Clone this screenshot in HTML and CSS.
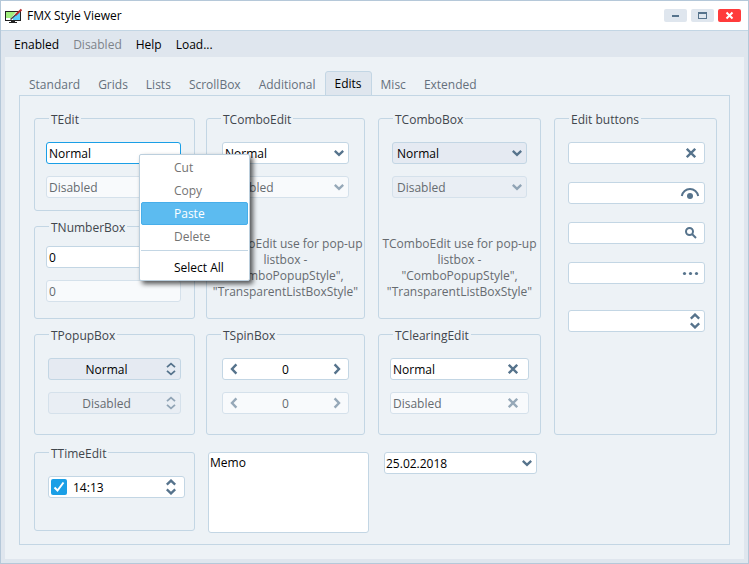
FILE: index.html
```html
<!DOCTYPE html>
<html lang="en">
<head>
<meta charset="utf-8">
<meta name="viewport" content="width=device-width, initial-scale=1">
<title>FMX Style Viewer</title>
<link rel="stylesheet" href="styles.css">
</head>
<body>
<svg class="sprite" aria-hidden="true">
  <symbol id="chevron-down" viewBox="0 0 10 12"><path d="M.8 3.800 5 7.800l4.200-4" /></symbol>
  <symbol id="chevron-left" viewBox="0 0 10 12"><path d="M7.400 1.400 3 6l4.400 4.600" /></symbol>
  <symbol id="chevron-right" viewBox="0 0 10 12"><path d="M2.600 1.400 7 6l-4.400 4.600" /></symbol>
  <symbol id="cross" viewBox="0 0 10 12"><path d="M.8 1.800l8.400 8.400M9.200 1.800.8 10.200" /></symbol>
  <symbol id="updown" viewBox="0 0 10 16"><path d="M.8 5.600 5 1.600l4.200 4M.8 10.400l4.200 4 4.200-4" /></symbol>
  <symbol id="updown-small" viewBox="0 0 10 16"><path class="thin" d="M1 6.200 5 2.600l4 3.600M1 9.800l4 3.600 4-3.600" /></symbol>
</svg>
<div class="window">
  <header class="titlebar">
    <svg class="app-icon" viewBox="0 0 18 16" aria-hidden="true">
      <rect x=".5" y="3.500" width="15" height="9" fill="#fff" stroke="#222"/>
      <path d="M1 4h10L6 10H1z" fill="#a0ee7c"/>
      <path d="M15 5v7H8V9l4-4z" fill="#5ccbfa"/>
      <path d="M6 13h4v1h2v1H4v-1h2z" fill="#222"/>
      <path d="M5.500 11.500 11 6.500" stroke="#444" stroke-width="1.500"/>
      <path d="M10.500 7 16.500 1.500" stroke="#b22a2a" stroke-width="2"/>
    </svg>
    <h1 class="title">FMX Style Viewer</h1>
    <button class="winbtn" aria-label="Minimize"><svg viewBox="0 0 23 13"><path d="M8 7h7" stroke="#56738c" stroke-width="2"/></svg></button>
    <button class="winbtn" aria-label="Maximize"><svg viewBox="0 0 23 13"><path d="M7 3h9v7H7z M8 5v4h7V5z" fill="#56738c" fill-rule="evenodd"/></svg></button>
    <button class="winbtn close" aria-label="Close"><svg viewBox="0 0 23 13"><path d="M8.500 3.500l6 6M14.500 3.500l-6 6" stroke="#fff" stroke-width="2"/></svg></button>
  </header>
  <nav class="menubar">
    <button>Enabled</button>
    <button disabled>Disabled</button>
    <button>Help</button>
    <button>Load...</button>
  </nav>
  <main class="client">
    <div class="tabs" role="tablist">
      <button role="tab">Standard</button>
      <button role="tab">Grids</button>
      <button role="tab">Lists</button>
      <button role="tab">ScrollBox</button>
      <button role="tab">Additional</button>
      <button role="tab" class="active" aria-selected="true">Edits</button>
      <button role="tab">Misc</button>
      <button role="tab">Extended</button>
    </div>
    <section class="panel">
      <div class="stack">
        <fieldset class="group edit-group">
          <legend>TEdit</legend>
          <div class="field focused"><input type="text" value="Normal" aria-label="Edit"></div>
          <div class="field disabled"><input type="text" value="Disabled" aria-label="Disabled edit" disabled></div>
          <div class="popup-menu" role="menu">
            <button role="menuitem" disabled>Cut</button>
            <button role="menuitem" disabled>Copy</button>
            <button role="menuitem" class="hot">Paste</button>
            <button role="menuitem" disabled>Delete</button>
            <hr>
            <button role="menuitem">Select All</button>
          </div>
        </fieldset>
        <fieldset class="group number-group">
          <legend>TNumberBox</legend>
          <div class="field"><input type="text" value="0" aria-label="Number"></div>
          <div class="field disabled"><input type="text" value="0" aria-label="Disabled number" disabled></div>
        </fieldset>
      </div>

      <fieldset class="group inset wide">
        <legend>TComboEdit</legend>
        <div class="field"><input type="text" value="Normal" aria-label="Combo edit"><button class="glyph" aria-label="Open list"><svg><use href="#chevron-down"/></svg></button></div>
        <div class="field disabled"><input type="text" value="Disabled" aria-label="Disabled combo edit" disabled><button class="glyph" aria-label="Open disabled list" disabled><svg><use href="#chevron-down"/></svg></button></div>
        <p class="note">TComboEdit use for pop-up listbox - "ComboPopupStyle", "TransparentListBoxStyle"</p>
      </fieldset>

      <fieldset class="group inset combo-group">
        <legend>TComboBox</legend>
        <div class="field box"><select aria-label="Combo box"><option>Normal</option></select><span class="glyph"><svg><use href="#chevron-down"/></svg></span></div>
        <div class="field box disabled"><select aria-label="Disabled combo box" disabled><option>Disabled</option></select><span class="glyph"><svg><use href="#chevron-down"/></svg></span></div>
        <p class="note">TComboEdit use for pop-up listbox - "ComboPopupStyle", "TransparentListBoxStyle"</p>
      </fieldset>

      <fieldset class="group buttons-group">
        <legend>Edit buttons</legend>
        <div class="field"><input type="text" aria-label="Clear edit"><button class="glyph far" aria-label="Clear"><svg><use href="#cross"/></svg></button></div>
        <div class="field"><input type="text" aria-label="Password edit"><button class="glyph large" aria-label="Show password"><svg viewBox="0 0 20 16"><path d="M1.800 11A8.300 8.300 0 0 1 18.200 11"/><circle cx="10" cy="11" r="3"/></svg></button></div>
        <div class="field"><input type="text" aria-label="Search edit"><button class="glyph large" aria-label="Search"><svg viewBox="0 0 20 16"><circle class="ring" cx="9.500" cy="6.500" r="3.500"/><path d="M12 9l4 4"/></svg></button></div>
        <div class="field"><input type="text" aria-label="Ellipsis edit"><button class="glyph large" aria-label="More"><svg viewBox="0 0 20 16"><circle cx="4.500" cy="8.500" r="1.600"/><circle cx="10.500" cy="8.500" r="1.600"/><circle cx="16.500" cy="8.500" r="1.600"/></svg></button></div>
        <div class="field last"><input type="text" aria-label="Spin edit"><button class="glyph" aria-label="Change value"><svg class="tall"><use href="#updown"/></svg></button></div>
      </fieldset>

      <fieldset class="group popup-group">
        <legend>TPopupBox</legend>
        <div class="field box center"><select aria-label="Popup box"><option>Normal</option></select><span class="glyph"><svg class="tall"><use href="#updown-small"/></svg></span></div>
        <div class="field box center disabled"><select aria-label="Disabled popup box" disabled><option>Disabled</option></select><span class="glyph"><svg class="tall"><use href="#updown-small"/></svg></span></div>
      </fieldset>

      <fieldset class="group inset wide">
        <legend>TSpinBox</legend>
        <div class="field spin"><button class="glyph" aria-label="Decrease"><svg><use href="#chevron-left"/></svg></button><input type="text" value="0" aria-label="Spin box"><button class="glyph" aria-label="Increase"><svg><use href="#chevron-right"/></svg></button></div>
        <div class="field spin disabled"><button class="glyph" aria-label="Decrease disabled" disabled><svg><use href="#chevron-left"/></svg></button><input type="text" value="0" aria-label="Disabled spin box" disabled><button class="glyph" aria-label="Increase disabled" disabled><svg><use href="#chevron-right"/></svg></button></div>
      </fieldset>

      <fieldset class="group inset clearing-group">
        <legend>TClearingEdit</legend>
        <div class="field"><input type="text" value="Normal" aria-label="Clearing edit"><button class="glyph far" aria-label="Clear text"><svg><use href="#cross"/></svg></button></div>
        <div class="field disabled"><input type="text" value="Disabled" aria-label="Disabled clearing edit" disabled><button class="glyph far" aria-label="Clear disabled text" disabled><svg><use href="#cross"/></svg></button></div>
      </fieldset>

      <fieldset class="group time-group">
        <legend>TTimeEdit</legend>
        <div class="field">
          <span class="check"><input type="checkbox" checked aria-label="Use time"><svg viewBox="0 0 16 16"><path d="M3.500 8.500 6.500 11.500 12.500 3.500"/></svg></span>
          <input type="text" value="14:13" aria-label="Time"><button class="glyph far" aria-label="Change time"><svg class="tall"><use href="#updown"/></svg></button>
        </div>
      </fieldset>

      <textarea class="memo" aria-label="Memo">Memo</textarea>

      <div class="field date"><input type="text" value="25.02.2018" aria-label="Date"><button class="glyph" aria-label="Open calendar"><svg><use href="#chevron-down"/></svg></button></div>
    </section>
  </main>
</div>
</body>
</html>
```

FILE: styles.css
```css
:root {
  --line: #c3d6e4;
  --frame: #dfe6ee;
  --surface: #edf2f6;
  --box: #e5eaf2;
  --glyph: #56738c;
  --accent: #1a9fe6;
}

* {
  box-sizing: border-box;
}

body {
  margin: 0;
  font: 12px/16px "Open Sans", "Noto Sans", sans-serif;
  color: #000;
}

button,
input,
select,
textarea {
  font: inherit;
  color: inherit;
  margin: 0;
  padding: 0;
  border: 0;
  background: none;
  outline: 0;
  appearance: none;
  border-radius: 0;
}

svg {
  display: block;
}

.sprite {
  display: none;
}

.window {
  display: flex;
  flex-direction: column;
  min-height: 100vh;
  border: 1px solid #b5c8d9;
  background: var(--frame);
}

.titlebar {
  display: flex;
  align-items: center;
  gap: 4px;
  height: 30px;
  padding: 0 7px 0 4px;
  border-bottom: 1px solid var(--line);
  background: #fff;
}

.app-icon {
  width: 18px;
  height: 16px;
}

.title {
  flex: 1;
  margin: 0;
  font-size: 12px;
  font-weight: 400;
}

.winbtn {
  width: 23px;
  height: 13px;
  border-radius: 2px;
  background: var(--frame);
}

.winbtn.close {
  background: #ff3b3b;
}

.menubar {
  display: flex;
  height: 26px;
  padding: 2px 6px 0;
}

.menubar button {
  padding: 0 7px;
}

.menubar button:disabled {
  color: #7d838a;
}

.client {
  flex: 1;
  display: flex;
  flex-direction: column;
  margin: 0 4px 4px;
  padding: 14px;
  background: var(--surface);
}

.tabs {
  display: flex;
  height: 25px;
  margin-bottom: -1px;
  padding-left: 1px;
}

.tabs button {
  padding: 2px 9px 0;
  color: #65707c;
}

.tabs .active {
  position: relative;
  padding: 1px 9px 0;
  border: 1px solid var(--line);
  border-radius: 3px 3px 0 0;
  background: var(--frame);
  color: #000;
}

.panel {
  flex: 1;
  display: grid;
  grid-template-columns: minmax(0, 161fr) minmax(0, 161fr) minmax(0, 165fr) minmax(0, 163fr);
  grid-template-rows: auto auto 1fr;
  gap: 15px 11px;
  padding: 22px 12px 11px 14px;
  border: 1px solid var(--line);
}

.stack {
  display: grid;
  gap: 15px;
}

.group {
  position: relative;
  min-width: 0;
  margin: 0;
  padding: 23px 11px 12px;
  border: 1px solid var(--line);
  border-radius: 3px;
}

.group legend {
  height: 1px;
  margin-left: 3px;
  padding: 0 2px;
  line-height: 3px;
  color: #41464d;
}

.inset {
  margin-right: 2px;
}

.edit-group,
.number-group {
  padding-right: 13px;
}

.number-group {
  padding-top: 19px;
  padding-bottom: 16px;
}

.wide {
  padding-left: 15px;
  padding-right: 15px;
}

.wide legend {
  margin-left: -1px;
}

.combo-group {
  padding-left: 13px;
  padding-right: 13px;
}

.popup-group {
  padding: 23px 13px 20px;
}

.combo-group legend,
.popup-group legend,
.time-group legend,
.buttons-group legend {
  margin-left: 1px;
}

.time-group {
  padding: 23px 9px 11px 13px;
  margin-top: 2px;
  height: 79px;
}

.buttons-group {
  grid-column: 4;
  grid-row: 1 / span 2;
  padding: 23px 11px 11px 13px;
}

.field {
  position: relative;
  display: flex;
  height: 22px;
  border: 1px solid var(--line);
  border-radius: 3px;
  background: #fff;
}

.field + .field {
  margin-top: 12px;
}

.buttons-group .field + .field {
  margin-top: 18px;
}

.buttons-group .field + .last {
  margin-top: 26px;
}

.field input,
.field select {
  flex: 1;
  min-width: 0;
  padding: 2px 2px 0;
}

.focused {
  border-color: var(--accent);
}

.disabled {
  border-color: #d5e1eb;
  background: #f8fafc;
  color: #666b70;
}

.box {
  background: var(--box);
}

.box.disabled {
  background: #e9eef4;
}

.field.box select {
  padding: 2px 20px 0 4px;
  opacity: 1;
}

.box .glyph {
  position: absolute;
  right: 0;
  top: 0;
  bottom: 0;
  pointer-events: none;
}

.field.center select {
  text-align: center;
  text-align-last: center;
  padding: 2px 16px 0 0;
}

.glyph {
  display: flex;
  align-items: center;
  justify-content: center;
  width: 18px;
}

.glyph svg {
  width: 10px;
  height: 12px;
  fill: var(--glyph);
}

.sprite path {
  fill: none;
  stroke: var(--glyph);
  stroke-width: 2.4;
}

.sprite .thin {
  stroke-width: 1.8;
}

.glyph path,
.glyph .ring {
  fill: none;
  stroke: var(--glyph);
  stroke-width: 2;
}

.disabled .glyph {
  opacity: 0.6;
}

.glyph svg.tall {
  height: 16px;
}

.glyph.far {
  width: 26px;
}

.clearing-group .glyph {
  width: 30px;
}

.glyph.large {
  width: 28px;
}

.glyph.large svg {
  width: 20px;
  height: 16px;
}

.spin .glyph {
  width: 22px;
}

.spin input {
  text-align: center;
}

.note {
  margin: 38px -12px 0;
  text-align: center;
  color: #666b70;
}

.wide .note {
  margin-left: -16px;
  margin-right: -16px;
}

.check {
  position: relative;
  width: 16px;
  height: 16px;
  margin: 2px 4px 0 2px;
}

.field .check input {
  display: block;
  width: 16px;
  height: 16px;
  border-radius: 2px;
  background: var(--accent);
}

.check svg {
  position: absolute;
  inset: 0;
  fill: none;
  stroke: #fff;
  stroke-width: 2;
  pointer-events: none;
}

.memo {
  height: 81px;
  margin: 2px -2px 0 2px;
  padding: 2px 1px;
  width: auto;
  border: 1px solid var(--line);
  border-radius: 3px;
  background: #fff;
  resize: none;
}

.field.date {
  margin: 2px 6px 0;
}

.date input {
  padding: 2px 1px 0;
}

.popup-menu {
  position: absolute;
  z-index: 2;
  left: 104px;
  top: 35px;
  width: 111px;
  padding: 1px;
  border: 1px solid #bccfdd;
  border-radius: 2px;
  background: #fff;
  box-shadow: 3px 3px 5px rgba(0, 0, 0, 0.65);
}

.popup-menu button {
  display: block;
  width: 100%;
  height: 23px;
  padding: 0 33px;
  text-align: left;
  white-space: nowrap;
}

.popup-menu button:disabled {
  color: #737373;
}

.popup-menu .hot {
  padding: 0 32px;
  border: 1px solid #47aeea;
  border-radius: 2px;
  background: #5cbbf0;
  color: #fff;
}

.popup-menu hr {
  height: 1px;
  margin: 2px 0 5px;
  border: 0;
  background: var(--line);
}
```
